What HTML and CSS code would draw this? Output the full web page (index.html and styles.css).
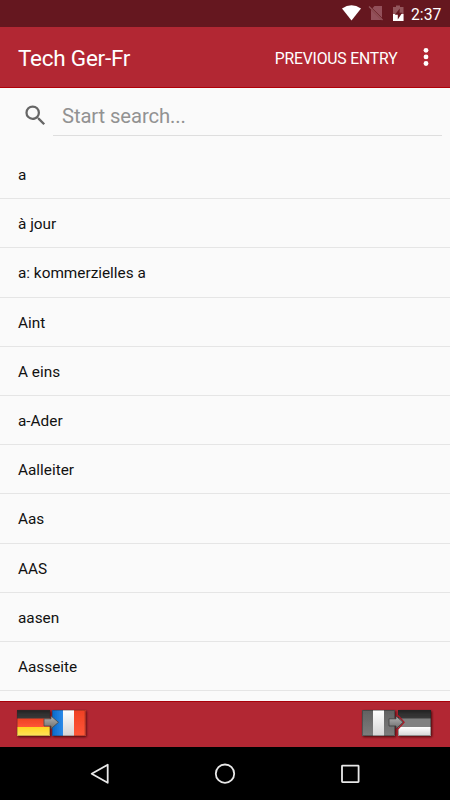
FILE: index.html
```html
<!DOCTYPE html>
<html lang="en">
<head>
<meta charset="utf-8">
<title>Tech Ger-Fr</title>
<link rel="stylesheet" href="styles.css">
</head>
<body>
<div class="status">
  <svg width="120" height="27" viewBox="330 0 120 27">
    <path d="M342 8.600Q351.500 2 361 8.600L351.500 20.500Z" fill="#fff"/>
    <path d="M374.500 6H382V17.800L372.400 8.200ZM371 9.500L381.500 20H371Z" fill="#93505a"/>
    <path d="M369 6.500L382.500 20" stroke="#93565c" stroke-width="1.200"/>
    <path d="M393 7H396V5.500H400V7H403.500V21H393Z" fill="#93565c"/>
    <path d="M393 14H403.500V21H393Z" fill="#fff"/>
    <path d="M399.800 8.500L394.800 14.800H397.800V19.500L402.200 12.800H399.500Z" fill="#65171f"/>
  </svg>
  <span class="clock">2:37</span>
</div>
<header class="appbar">
  <h1 class="title">Tech Ger-Fr</h1>
  <span class="action">PREVIOUS ENTRY</span>
  <svg class="more" width="6" height="20" viewBox="0 0 6 20" fill="#fff"><circle cx="3" cy="3.300" r="2.400"/><circle cx="3" cy="9.900" r="2.400"/><circle cx="3" cy="16.500" r="2.400"/></svg>
</header>
<main class="content">
  <div class="search">
    <svg class="lens" width="27" height="27" viewBox="0 0 24 24" fill="#666"><path d="M15.500 14h-.79l-.28-.27A6.470 6.470 0 0 0 16 9.500 6.500 6.500 0 1 0 9.500 16c1.610 0 3.090-.59 4.230-1.570l.27.28v.79l5 4.990L20.490 19zm-6 0a4.500 4.500 0 1 1 0-9 4.500 4.500 0 0 1 0 9z"/></svg>
    <div class="field">Start search...</div>
  </div>
  <ul class="list">
    <li>a</li><li>à jour</li><li>a: kommerzielles a</li><li>Aint</li><li>A eins</li><li>a-Ader</li><li>Aalleiter</li><li>Aas</li><li>AAS</li><li>aasen</li><li>Aasseite</li>
  </ul>
</main>
<footer class="languages">
  <svg width="76" height="34" viewBox="14 707 76 34">
    <defs>
      <linearGradient id="dark" x2="0" y2="1"><stop stop-color="#242424"/><stop offset="1" stop-color="#3c3c3c"/></linearGradient>
      <linearGradient id="red" x2="0" y2="1"><stop stop-color="#ee4124"/><stop offset="1" stop-color="#ff5637"/></linearGradient>
      <linearGradient id="gold" x2="0" y2="1"><stop stop-color="#ffd520"/><stop offset="1" stop-color="#ffe45c"/></linearGradient>
      <linearGradient id="blue"><stop stop-color="#0868c8"/><stop offset="1" stop-color="#2d8bea"/></linearGradient>
      <linearGradient id="white" x2="0" y2="1"><stop stop-color="#fff"/><stop offset="1" stop-color="#d5d5d5"/></linearGradient>
      <linearGradient id="arrow" x2="0" y2="1"><stop stop-color="#b5b5b5"/><stop offset="1" stop-color="#6c6c6c"/></linearGradient>
      <filter id="shadow" x="-10%" y="-10%" width="130%" height="140%"><feDropShadow dx="1" dy="1" stdDeviation=".8" flood-color="#300" flood-opacity=".8"/></filter>
    </defs>
    <g filter="url(#shadow)">
      <path fill="url(#dark)" d="M17 710H50V719H17Z"/><path fill="url(#red)" d="M17 718.500H50V727.500H17Z"/><path fill="url(#gold)" d="M17 727H50V736H17Z"/>
      <path fill="url(#blue)" d="M52 710H63.500V736H52Z"/><path fill="url(#white)" d="M63 710H74.500V736H63Z"/><path fill="url(#red)" d="M74 710H85.500V736H74Z"/>
    </g>
    <path d="M17.500 710.500H49.500V735.500H17.500ZM52.500 710.500H85V735.500H52.500Z" fill="none" stroke="#402020" stroke-opacity=".3"/>
    <path d="M44 718.800H51V716L58.500 722.300L51 728.800V726H44Z" fill="url(#arrow)" stroke="#494949" stroke-width=".8"/>
  </svg>
  <svg width="76" height="34" viewBox="359 707 76 34">
    <defs>
      <linearGradient id="gray" x2="0" y2="1"><stop stop-color="#616161"/><stop offset="1" stop-color="#7d7d7d"/></linearGradient>
    </defs>
    <g filter="url(#shadow)">
      <path fill="url(#gray)" d="M362 710H373.500V736H362ZM384 710H395V736H384Z"/><path fill="url(#white)" d="M373 710H384V736H373Z"/>
      <path fill="url(#dark)" d="M398 710H431V719H398Z"/><path fill="#818181" d="M398 718.500H431V727.500H398Z"/><path fill="url(#white)" d="M398 727H431V736H398Z"/>
    </g>
    <path d="M362.500 710.500H394.500V735.500H362.500ZM398.500 710.500H430.500V735.500H398.500Z" fill="none" stroke="#222" stroke-opacity=".4"/>
    <path d="M398 715.500L404 722.300L398 729" fill="none" stroke="#a81c28" stroke-width="1.400"/>
    <path d="M389 718.800H396V716L403 722.300L396 728.800V726H389Z" fill="url(#arrow)" stroke="#3c3c3c" stroke-width=".8"/>
  </svg>
</footer>
<nav class="navbar">
  <svg width="450" height="53" viewBox="0 747 450 53" fill="none" stroke="#e8e8e8" stroke-width="1.800" stroke-linejoin="round">
    <path d="M107.700 764.700V782.800L91.700 773.800Z"/><circle cx="225" cy="773.700" r="9.200"/><rect x="342" y="765.700" width="16.600" height="16.400" rx=".5"/>
  </svg>
</nav>
</body>
</html>
```

FILE: styles.css
```css
* { box-sizing: border-box; }
body {
  margin: 0;
  width: 450px;
  height: 800px;
  overflow: hidden;
  display: flex;
  flex-direction: column;
  background: #fafafa;
  font-family: Roboto, "Liberation Sans", sans-serif;
}
svg { display: block; flex: none; }
.status {
  height: 27px;
  flex: none;
  display: flex;
  justify-content: flex-end;
  background: #65171f;
  color: #fff;
}
.status svg { margin-right: -39px; }
.clock {
  width: 39px;
  font-size: 15.75px;
  line-height: 29px;
}
.appbar {
  height: 61px;
  flex: none;
  display: flex;
  align-items: center;
  padding: 1px 21.5px 0 18px;
  background: #b22733;
  border-bottom: 1px solid #b00008;
  color: #fff;
}
.title {
  flex: 1;
  margin: 0;
  font-size: 22.5px;
  font-weight: 400;
  letter-spacing: -0.24px;
}
.action { font-size: 15.75px; letter-spacing: -0.18px; padding-top: 1px; }
.more { margin-left: 25px; margin-top: -1px; }
.content { height: 613px; flex: none; overflow: hidden; }
.search {
  height: 62px;
  display: flex;
  padding: 8px 8px 0 22px;
}
.lens { margin: 6px 4px 0 0; }
.field {
  flex: 1;
  height: 40px;
  padding-left: 9px;
  border-bottom: 1px solid #dedede;
  color: #929292;
  font-size: 20.25px;
  letter-spacing: -0.11px;
  line-height: 41px;
}
.list { list-style: none; margin: 0; padding: 0; }
.list li {
  height: 49.2px;
  padding-left: 18px;
  border-bottom: 1px solid #e5e5e5;
  color: #111;
  font-size: 15.35px;
  line-height: 50.5px;
}
.languages {
  height: 46px;
  flex: none;
  display: flex;
  justify-content: space-between;
  padding: 5px 15px 0 14px;
  background: #b22733;
  border-top: 1px solid #a80008;
}
.navbar { height: 53px; flex: none; background: #000; }
```
